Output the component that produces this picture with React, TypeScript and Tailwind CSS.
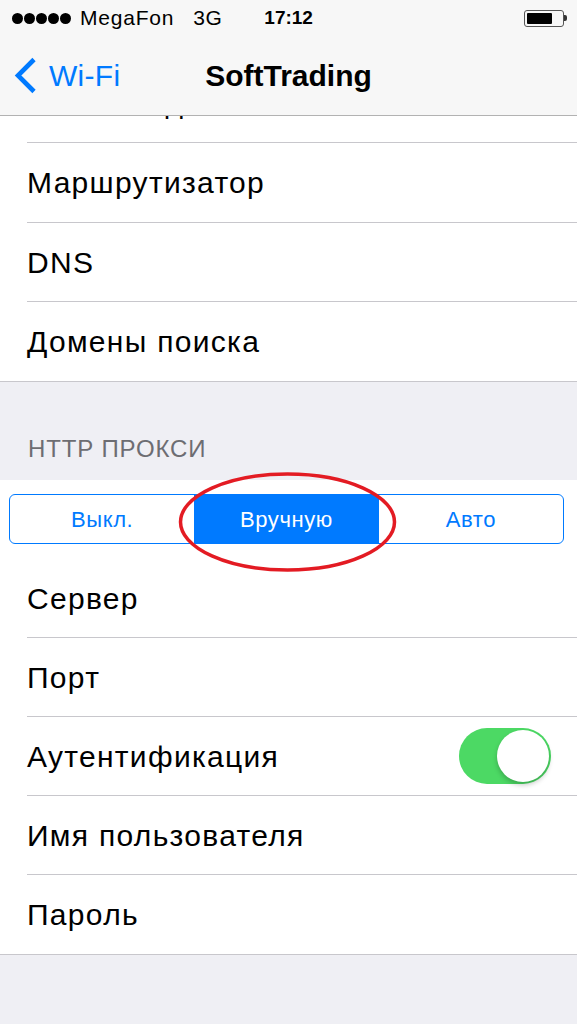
const font = { fontFamily: '"Liberation Sans", Arial, sans-serif' };

type RowProps = {
  label: string;
  height?: string;
  last?: boolean;
  children?: React.ReactNode;
};

function Row({ label, height = "h-[79px]", last, children }: RowProps) {
  return (
    <div className={"flex shrink-0 pl-[27px] " + height}>
      <div
        className={
          "flex flex-1 items-center justify-between pr-[27px] " +
          (last ? "" : "border-b border-[#c8c7cc]")
        }
      >
        <span className="text-[30px] tracking-[1.3px] text-black">{label}</span>
        {children}
      </div>
    </div>
  );
}

function Toggle() {
  return (
    <div className="mr-[-1px] flex h-[56px] w-[92px] items-center justify-end rounded-full bg-[#4cd964] p-[2px]">
      <div className="h-[52px] w-[52px] rounded-full bg-white shadow-[0_3px_5px_rgba(0,0,0,0.22)]" />
    </div>
  );
}

function StatusBar() {
  return (
    <div className="flex h-[36px] items-center pl-[12px] text-[21px] text-black">
      <div className="flex gap-[1px]">
        {[0, 1, 2, 3, 4].map((i) => (
          <span key={i} className="h-[11px] w-[11px] rounded-full bg-black" />
        ))}
      </div>
      <span className="ml-[9px] tracking-[0.8px]">MegaFon</span>
      <span className="ml-[19px] tracking-[0.5px]">3G</span>
      <span className="ml-[42px] text-[19px] font-bold">17:12</span>
      <div className="ml-auto mr-[10px] flex items-center">
        <div className="flex h-[17px] w-[40px] rounded-[3px] border border-[#555] p-[2px]">
          <div className="h-full w-[25px] rounded-[1px] bg-black" />
        </div>
        <div className="h-[6px] w-[3px] rounded-r-[2px] bg-[#333]" />
      </div>
    </div>
  );
}

function NavBar() {
  return (
    <div className="relative flex h-[80px] items-center border-b border-[#b2b2b2]">
      <div className="flex items-center pl-[14px] text-[#007aff]">
        <svg width="23" height="37" viewBox="0 0 23 37" className="mr-[12px]">
          <polyline
            points="20,2.5 4,18.5 20,34.5"
            fill="none"
            stroke="#007aff"
            strokeWidth="4.6"
            strokeLinecap="butt"
            strokeLinejoin="miter"
          />
        </svg>
        <span className="text-[30px] tracking-[0.3px]">Wi-Fi</span>
      </div>
      <span className="absolute left-1/2 -translate-x-1/2 whitespace-nowrap text-[30px] font-bold text-black">
        SoftTrading
      </span>
    </div>
  );
}

function Segmented() {
  const items = ["Выкл.", "Вручную", "Авто"];
  return (
    <div className="relative pl-[9px] pr-[13px] pt-[14px] pb-[15px]">
      <div className="grid h-[50px] grid-cols-3 overflow-hidden rounded-[6px] border-[1.5px] border-[#007aff]">
        {items.map((item, i) => (
          <div
            key={item}
            className={
              "flex items-center justify-center text-[22px] tracking-[0.6px] " +
              (i === 1 ? "bg-[#007aff] text-white" : "text-[#007aff]")
            }
          >
            {item}
          </div>
        ))}
      </div>
      <svg
        className="pointer-events-none absolute left-[177px] top-[-8px]"
        width="222"
        height="102"
        viewBox="0 0 222 102"
      >
        <ellipse
          cx="110.5"
          cy="50"
          rx="107"
          ry="48"
          fill="none"
          stroke="#e31b23"
          strokeWidth="3.5"
        />
      </svg>
    </div>
  );
}

export default function App() {
  return (
    <div className="flex h-[1024px] w-[577px] flex-col overflow-hidden bg-[#efeff4]" style={font}>
      <div className="bg-[#f7f7f7]">
        <StatusBar />
        <NavBar />
      </div>

      <div className="flex flex-col bg-white">
        {/* row scrolled mostly under the nav bar */}
        <div className="flex h-[27px] flex-col justify-end overflow-hidden">
          <Row label="Маска подсети" height="h-[80px]" />
        </div>
        <Row label="Маршрутизатор" height="h-[80px]" />
        <Row label="DNS" />
        <Row label="Домены поиска" last />
      </div>

      <div className="flex h-[99px] items-end border-t border-[#c8c7cc] px-[28px] pb-[13px]">
        <span className="text-[24px] tracking-[0.9px] text-[#6d6d72]">HTTP ПРОКСИ</span>
      </div>

      <div className="flex flex-col bg-white">
        <Segmented />
        <Row label="Сервер" />
        <Row label="Порт" />
        <Row label="Аутентификация">
          <Toggle />
        </Row>
        <Row label="Имя пользователя" />
        <Row label="Пароль" last />
      </div>
      <div className="border-t border-[#c8c7cc]" />
    </div>
  );
}
